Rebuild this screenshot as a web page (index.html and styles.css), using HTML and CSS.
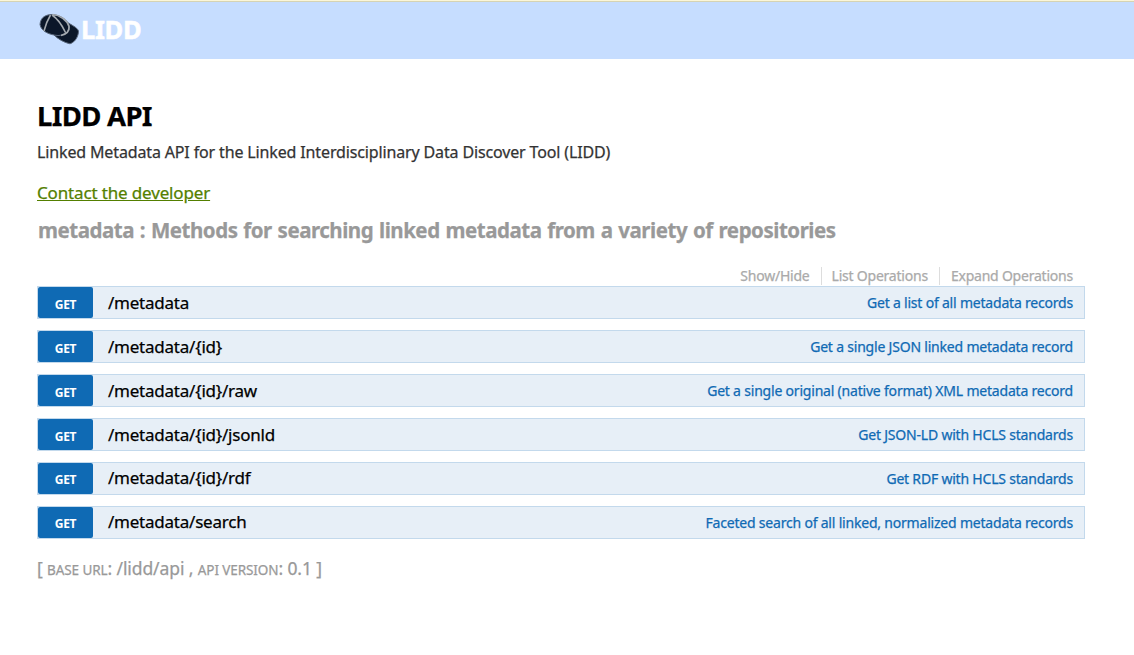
FILE: index.html
```html
<!DOCTYPE html>
<html lang="en">
<head>
<meta charset="utf-8">
<title>LIDD API</title>
<link rel="stylesheet" href="styles.css">
</head>
<body>
<header class="topbar">
  <a class="brand">
    <svg class="cap" width="42" height="32" viewBox="0 0 42 32">
      <path class="cap-brim" d="M29 9 C33 12 39 14 40.500 18 C40.500 23 37.500 29 32 30.800 C26 29.500 20 26 16 22 Z"/>
      <path class="cap-crown" d="M2 11.500 C2.500 4 8 1.500 14.500 1.500 C22 2 30 7 31.500 13.500 C32 19 26 22.500 20 22.500 C12 22 3 18.500 2 11.500 Z"/>
      <path class="cap-seam" d="M12.500 2 C9.500 7 7.500 12 6 18 M14 2 C20 6 24 12 27.500 19.500 M14.500 1.500 C22 2 29 7 31 13.500 C31.500 18 29 21 23 22.500"/>
    </svg>
    <span class="brand-name">LIDD</span>
  </a>
</header>
<main class="page">
  <h1 class="title">LIDD API</h1>
  <p class="summary">Linked Metadata API for the Linked Interdisciplinary Data Discover Tool (LIDD)</p>
  <p class="contact"><a>Contact the developer</a></p>
  <h2 class="resource">metadata : Methods for searching linked metadata from a variety of repositories</h2>
  <ul class="options"><li>Show/Hide</li><li>List Operations</li><li>Expand Operations</li></ul>
  <ul class="endpoints">
    <li class="endpoint"><span class="method">GET</span><span class="path">/metadata</span><span class="desc">Get a list of all metadata records</span></li>
    <li class="endpoint"><span class="method">GET</span><span class="path">/metadata/{id}</span><span class="desc">Get a single JSON linked metadata record</span></li>
    <li class="endpoint"><span class="method">GET</span><span class="path">/metadata/{id}/raw</span><span class="desc">Get a single original (native format) XML metadata record</span></li>
    <li class="endpoint"><span class="method">GET</span><span class="path">/metadata/{id}/jsonld</span><span class="desc">Get JSON-LD with HCLS standards</span></li>
    <li class="endpoint"><span class="method">GET</span><span class="path">/metadata/{id}/rdf</span><span class="desc">Get RDF with HCLS standards</span></li>
    <li class="endpoint"><span class="method">GET</span><span class="path">/metadata/search</span><span class="desc">Faceted search of all linked, normalized metadata records</span></li>
  </ul>
  <p class="footer">[ <small>BASE URL</small>: /lidd/api , <small>API VERSION</small>: 0.1 ]</p>
</main>
</body>
</html>
```
FILE: styles.css
```css
* { box-sizing: border-box; }
body { margin: 0; background: #fff; font-family: "Noto Sans", "Open Sans", sans-serif; -webkit-text-stroke: 0.25px currentColor; }
h1, h2, p, ul { margin: 0; padding: 0; }
ul { list-style: none; }
.topbar { height: 59px; background: linear-gradient(#fbf6d8 1px, #d5d3b4 1px, #d5d3b4 2px, #c6ddff 2px); padding: 13px 0 0 38px; }
.brand { display: flex; }
.cap { flex: none; margin-right: 1px; }
.cap-brim, .cap-crown { fill: #0b1729; stroke: #59677b; stroke-width: 1; }
.cap-seam { fill: none; stroke: #a3a9af; stroke-width: 1.6; }
.brand-name { color: #fff; font-size: 25.500px; font-weight: 700; line-height: 32px; letter-spacing: -0.3px; -webkit-text-stroke-width: 0.5px; }
.page { padding: 38px 49px 0 37px; }
.title { height: 38px; font-size: 27.500px; line-height: 38px; font-weight: 700; letter-spacing: -0.68px; color: #000; }
.summary { height: 24px; margin-top: 5px; font-size: 16px; line-height: 24px; letter-spacing: -0.14px; color: #333; }
.contact { height: 26px; margin-top: 16px; font-size: 17px; line-height: 26px; letter-spacing: -0.15px; color: #547f00; text-decoration: underline; }
.resource { height: 30px; margin-top: 9px; padding-left: 1px; font-size: 20.500px; line-height: 30px; letter-spacing: -0.48px; word-spacing: 1px; white-space: nowrap; color: #999; }
.options { display: flex; justify-content: flex-end; margin: 22px 12px 1px 0; font-size: 14px; line-height: 18px; letter-spacing: -0.22px; color: #aaa; }
.options li + li { margin-left: 11px; padding-left: 10px; border-left: 1px solid #ddd; }
.options li:last-child { padding-left: 11px; }
.endpoints { display: grid; gap: 11px; }
.endpoint { display: flex; align-items: flex-start; height: 33px; padding-right: 11px; background: #e7eff7; border: 1px solid #c3d9ec; }
.method { width: 55px; height: 31px; border-radius: 2px; background: #0f6ab4; color: #fff; font-size: 12px; font-weight: 700; line-height: 35px; letter-spacing: -0.3px; text-align: center; -webkit-text-stroke-width: 0; }
.path { margin-left: 15px; font-size: 17px; line-height: 31px; letter-spacing: -0.23px; color: #000; }
.desc { margin-left: auto; font-size: 14px; line-height: 31px; letter-spacing: -0.2px; color: #0f6ab4; }
.endpoint:nth-child(n+5) .path { line-height: 29px; }
.endpoint:nth-child(n+5) .method { line-height: 33px; }
.footer { margin-top: 16px; font-size: 17.500px; line-height: 26px; letter-spacing: -0.1px; color: #999; }
.footer small { font-size: 13.500px; }
```
